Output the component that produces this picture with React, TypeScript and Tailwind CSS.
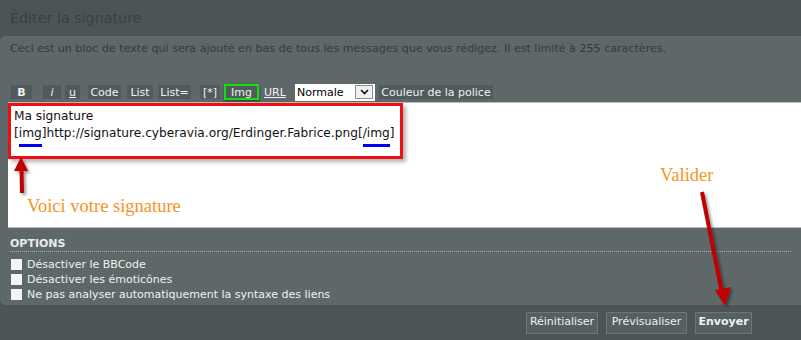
import React from "react";

const btn = "h-[14px] flex items-center justify-center bg-[#525b5b] text-[#eef2f2] text-[11px] leading-none shrink-0";
const footBtn = "h-[22px] flex items-center justify-center bg-[#566061] border border-[#6c7676] text-[11px] text-[#eef2f2]";

function Toolbar() {
  return (
    <div className="flex items-center h-[18px] pl-[11px]">
      <span className={`${btn} w-[21px] font-bold`}>B</span>
      <span className={`${btn} ml-[11px] w-[18px] italic`}>i</span>
      <span className={`${btn} ml-[4px] w-[15px] underline`}>u</span>
      <span className={`${btn} ml-[8px] w-[33px]`}>Code</span>
      <span className={`${btn} ml-[6px] w-[26px]`}>List</span>
      <span className={`${btn} ml-[5px] w-[33px]`}>List=</span>
      <span className={`${btn} ml-[9px] w-[20px]`}>[*]</span>
      <span className={`${btn} ml-[4px] w-[35px] h-[16px] border-2 border-[#10e010] shadow-[0_2px_3px_rgba(0,0,0,0.35)]`}>Img</span>
      <span className="ml-[5px] w-[23px] text-[11px] text-[#eef2f2] underline leading-none">URL</span>
      <div className="ml-[8px] h-[17px] w-[80px] bg-white flex items-center justify-between pl-[2px] pr-[2px] shrink-0">
        <span className="text-[11px] text-black leading-none">Normale</span>
        <span className="w-[18px] h-[14px] border border-[#8a8f8f] bg-[#f0f0f0] flex items-center justify-center">
          <svg width="9" height="6" viewBox="0 0 9 6">
            <path d="M1 1 L4.5 4.5 L8 1" stroke="#111" strokeWidth="1.6" fill="none" />
          </svg>
        </span>
      </div>
      <span className={`${btn} ml-[4px] w-[114px]`}>Couleur de la police</span>
    </div>
  );
}

function Check({ label }: { label: string }) {
  return (
    <div className="flex items-center h-[15px]">
      <span className="w-[11px] h-[11px] bg-[#f4f4f4] mr-[5px]" />
      <span className="text-[11px] text-[#eef2f2] leading-none">{label}</span>
    </div>
  );
}

export default function App() {
  return (
    <div
      className="relative w-[801px] h-[340px] overflow-hidden bg-[#4d5456] flex flex-col"
      style={{ fontFamily: '"DejaVu Sans", Verdana, sans-serif' }}
    >
      <div className="h-[36px] shrink-0 flex items-center pl-[10px]">
        <h1 className="text-[14.3px] text-[#3a4041] leading-none">Éditer la signature</h1>
      </div>

      <div className="bg-[#5e6868] rounded-l-[6px] h-[269px] shrink-0 flex flex-col">
        <p className="pl-[10px] pt-[6px] text-[11.1px] text-[#353b3b] leading-[13px] whitespace-nowrap">
          Ceci est un bloc de texte qui sera ajouté en bas de tous les messages que vous rédigez. Il est limité à 255 caractères.
        </p>
        <div className="mt-[28px]">
          <Toolbar />
        </div>

        <div className="relative shrink-0 ml-[8px] mt-[1px] h-[126px] bg-white border-t border-b border-[#b8c0c0]">
          <div className="w-[395px] h-[56px] border-[3px] border-[#ec1016] shadow-[3px_3px_4px_rgba(0,0,0,0.3)] pl-[3px] pt-[2px]">
            <div className="text-[12.2px] text-[#111] leading-[17px]">Ma signature</div>
            <div className="text-[12.2px] text-[#111] leading-[17px] whitespace-nowrap">
              [<span className="border-b-[3px] border-[#0000ee] pb-[4px]">img</span>]http://signature.cyberavia.org/Erdinger.Fabrice.png[<span className="border-b-[3px] border-[#0000ee] pb-[4px]">/img</span>]
            </div>
          </div>
          <span
            className="absolute left-[19px] top-[94px] text-[18.5px] text-[#f7941d] leading-none"
            style={{ fontFamily: '"Liberation Serif", serif' }}
          >
            Voici votre signature
          </span>
          <span
            className="absolute left-[652px] top-[63px] text-[18.5px] text-[#f7941d] leading-none"
            style={{ fontFamily: '"Liberation Serif", serif' }}
          >
            Valider
          </span>
        </div>

        <div className="mx-[10px] mt-[10px] pb-[2px] border-b border-dotted border-[#a8b0b0] text-[11px] leading-[11px] font-bold text-[#e6ecec]">
          OPTIONS
        </div>
        <div className="pl-[11px] pt-[5px] flex flex-col">
          <Check label="Désactiver le BBCode" />
          <Check label="Désactiver les émoticônes" />
          <Check label="Ne pas analyser automatiquement la syntaxe des liens" />
        </div>
      </div>

      <div className="flex-1 flex items-center justify-end gap-[8px] pr-[49px]">
        <button className={`${footBtn} w-[72px]`}>Réinitialiser</button>
        <button className={`${footBtn} w-[81px]`}>Prévisualiser</button>
        <button className={`${footBtn} w-[57px] font-bold`}>Envoyer</button>
      </div>

      <svg className="absolute inset-0 pointer-events-none" width="801" height="340" viewBox="0 0 801 340">
        <defs>
          <filter id="sh" x="-50%" y="-50%" width="200%" height="200%">
            <feDropShadow dx="2" dy="2" stdDeviation="1.5" floodColor="#000" floodOpacity="0.4" />
          </filter>
        </defs>
        <g fill="#c00000" stroke="#c00000" filter="url(#sh)">
          <line x1="22" y1="193" x2="21.5" y2="168" strokeWidth="4" />
          <polygon points="21,157 14,171 28,171" stroke="none" />
          <line x1="702" y1="192" x2="722" y2="293" strokeWidth="4" />
          <polygon points="725,306 715,290 731,287" stroke="none" />
        </g>
      </svg>
    </div>
  );
}
